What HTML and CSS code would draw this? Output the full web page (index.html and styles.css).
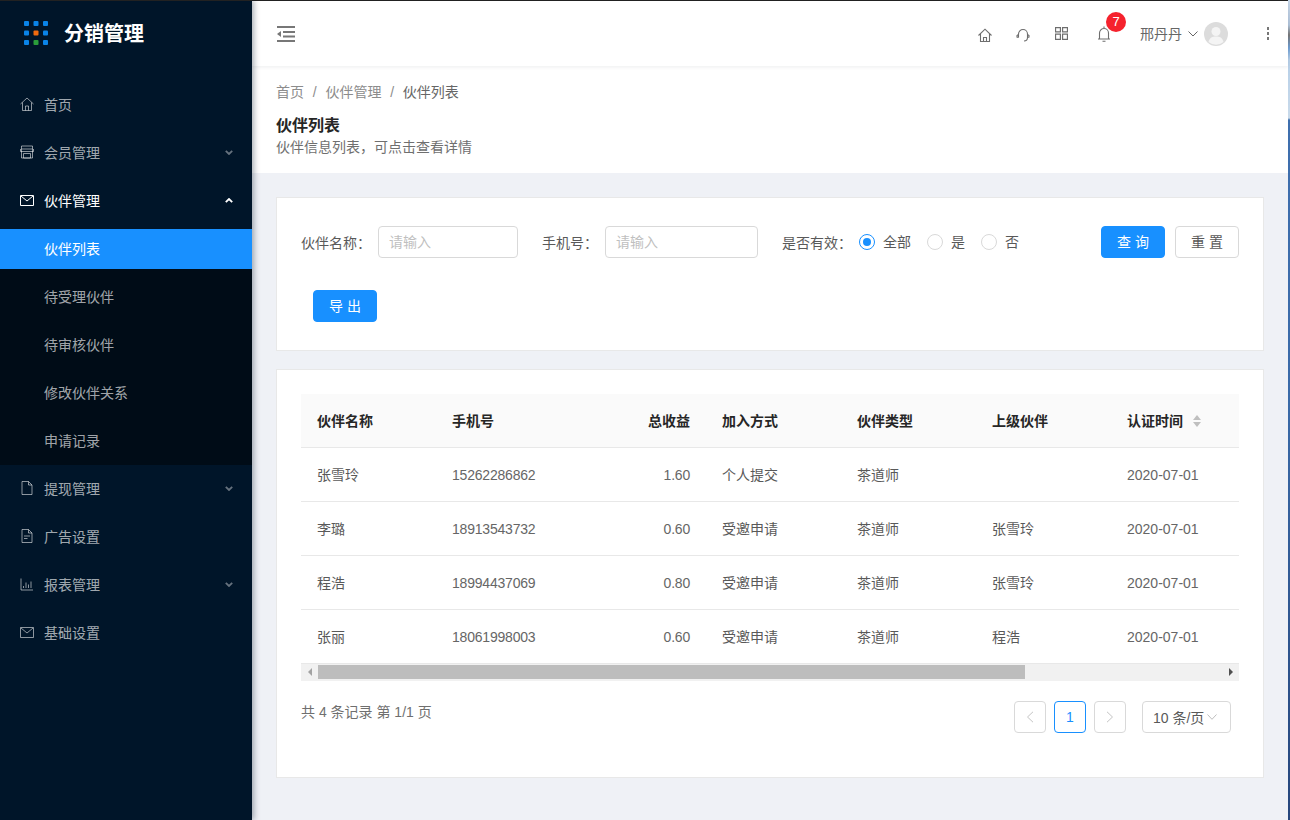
FILE: index.html
```html
<!DOCTYPE html>
<html lang="zh-CN">
<head>
  <meta charset="UTF-8">
  <title>伙伴列表</title>
  <link rel="stylesheet" href="styles.css">
</head>
<body>

<div class="app">
  <!-- Sidebar -->
  <aside class="sidebar">
    <div class="logo">
      <svg class="logo-mark" width="24" height="24" viewBox="0 0 24 24">
        <rect x="0" y="0" width="5" height="5" rx="1" fill="#0a84e8"/>
        <rect x="9.500" y="0" width="5" height="5" rx="1" fill="#0a84e8"/>
        <rect x="19" y="0" width="5" height="5" rx="1" fill="#0a84e8"/>
        <rect x="0" y="9.500" width="5" height="5" rx="1" fill="#0a84e8"/>
        <rect x="9.500" y="9.500" width="5" height="5" rx="1" fill="#f06a0f"/>
        <rect x="19" y="9.500" width="5" height="5" rx="1" fill="#0a84e8"/>
        <rect x="0" y="19" width="5" height="5" rx="1" fill="#0a84e8"/>
        <rect x="9.500" y="19" width="5" height="5" rx="1" fill="#2a9d3a"/>
        <rect x="19" y="19" width="5" height="5" rx="1" fill="#0a84e8"/>
      </svg>
      <span class="logo-text">分销管理</span>
    </div>

    <ul class="menu">
      <li class="menu-item">
        <svg class="menu-icon" viewBox="0 0 14 14"><path d="M.5 7 7 1l6.500 6M2.500 5.500v8h9v-8M5.500 13.500v-4.500h3v4.500"/></svg>
        首页
      </li>
      <li class="menu-item">
        <svg class="menu-icon" viewBox="0 0 14 14"><path d="M1.500 1h11v12h-11zM1.500 4h11M.5 4v2.500h13V4M3.500 8.500h7v4.500h-7z"/></svg>
        会员管理
        <svg class="arrow" viewBox="0 0 8 5"><path d="M.8.8 4 4l3.200-3.200"/></svg>
      </li>
      <li class="menu-item is-open">
        <svg class="menu-icon" viewBox="0 0 14 14"><path d="M.5 2.500h13v10H.5zM1 3l6 5 6-5"/></svg>
        伙伴管理
        <svg class="arrow" viewBox="0 0 8 5"><path d="M.8 4.200 4 1l3.200 3.200"/></svg>
      </li>
      <li>
        <ul class="submenu">
          <li class="submenu-item is-active">伙伴列表</li>
          <li class="submenu-item">待受理伙伴</li>
          <li class="submenu-item">待审核伙伴</li>
          <li class="submenu-item">修改伙伴关系</li>
          <li class="submenu-item">申请记录</li>
        </ul>
      </li>
      <li class="menu-item">
        <svg class="menu-icon" viewBox="0 0 14 14"><path d="M2 .5h6.500l3.500 3.500v9.500H2zM8.500.5V4H12"/></svg>
        提现管理
        <svg class="arrow" viewBox="0 0 8 5"><path d="M.8.8 4 4l3.200-3.200"/></svg>
      </li>
      <li class="menu-item">
        <svg class="menu-icon" viewBox="0 0 14 14"><path d="M2 .5h6.500l3.500 3.500v9.500H2zM8.500.5V4H12M4 7h6M4 9.500h3.500"/></svg>
        广告设置
      </li>
      <li class="menu-item">
        <svg class="menu-icon" viewBox="0 0 14 14"><path d="M1 1.500v11.500h12M3.500 11V9M6 11V5.500M8.500 11V7.500M11 11V4.500"/></svg>
        报表管理
        <svg class="arrow" viewBox="0 0 8 5"><path d="M.8.8 4 4l3.200-3.200"/></svg>
      </li>
      <li class="menu-item">
        <svg class="menu-icon" viewBox="0 0 14 14"><path d="M.5 2.500h13v10H.5zM1 3l6 5 6-5"/></svg>
        基础设置
      </li>
    </ul>
  </aside>

  <div class="main">
    <!-- Top bar -->
    <header class="topbar">
      <svg class="fold-icon" width="18" height="16" viewBox="0 0 18 16">
        <path d="M0 1h18M6 6h12M6 10.500h12M0 15h18" stroke="#777" stroke-width="2" fill="none"/>
        <path d="M0 8l4-3v6z" fill="#777"/>
      </svg>
      <div class="topbar-right">
        <svg class="top-icon icon-home" viewBox="0 0 14 14"><path d="M.5 7.500 7 1.200l6.500 6.300M2.500 6v7.500h9V6M5.500 13.500V9.500h3v4"/></svg>
        <svg class="top-icon icon-service" viewBox="0 0 14 14"><path d="M2.500 9.500V6a4.500 4.500 0 0 1 9 0v3.500M2.500 6.500 1 7.500v1.500l1.500.5M11.500 6.500l1.500 1v1.500l-1.500.5M11.500 9.500c0 2.200-1.500 3.500-3.500 3.500"/></svg>
        <svg class="top-icon icon-apps" viewBox="0 0 12 12"><path d="M.5.500h4.500v4H.5zM7 .5h4.500v4H7zM.5 6.500h4.500v5H.5zM7 6.500h4.500v5H7z"/></svg>
        <div class="bell">
          <svg class="bell-icon" viewBox="0 0 14 16"><path d="M2.500 12.500V7a4.500 4.500 0 0 1 9 0v5.500M1 13h12M5.500 15.300h3M7 .5v2"/></svg>
          <span class="badge">7</span>
        </div>
        <span class="user-name">邢丹丹</span>
        <svg class="user-arrow" width="10" height="6" viewBox="0 0 10 6"><path d="M.5.500 5 5 9.500.500" fill="none" stroke="#666"/></svg>
        <svg class="avatar" width="24" height="24" viewBox="0 0 24 24">
          <circle cx="12" cy="12" r="12" fill="#dcdcdc"/>
          <circle cx="12" cy="9.500" r="4.500" fill="#f4f4f4"/>
          <path d="M4.500 20c1-4.500 4-5.500 7.500-5.500s6.500 1 7.500 5.500a12 12 0 0 1-15 0z" fill="#f4f4f4"/>
        </svg>
        <div class="more-dots"><i></i><i></i><i></i></div>
      </div>
    </header>

    <!-- Page heading -->
    <section class="page-head">
      <div class="breadcrumb">
        <span>首页</span><em>/</em><span>伙伴管理</span><em>/</em><span class="current">伙伴列表</span>
      </div>
      <h2 class="page-title">伙伴列表</h2>
      <p class="page-desc">伙伴信息列表，可点击查看详情</p>
    </section>

    <div class="content">
      <!-- Filters -->
      <section class="card filter-card">
        <div class="filter-row">
          <label class="filter-label">伙伴名称：</label>
          <input class="text-input name-input" type="text" placeholder="请输入">
          <label class="filter-label phone-label">手机号：</label>
          <input class="text-input phone-input" type="text" placeholder="请输入">
          <label class="filter-label valid-label">是否有效：</label>
          <div class="radio is-checked"><span class="radio-dot"></span>全部</div>
          <div class="radio"><span class="radio-dot"></span>是</div>
          <div class="radio"><span class="radio-dot"></span>否</div>
          <button class="btn btn-primary btn-search">查 询</button>
          <button class="btn btn-reset">重 置</button>
        </div>
        <button class="btn btn-primary btn-export">导 出</button>
      </section>

      <!-- Table -->
      <section class="card table-card">
        <div class="table-wrap">
          <table class="data-table">
            <thead>
              <tr>
                <th>伙伴名称</th>
                <th>手机号</th>
                <th class="align-right">总收益</th>
                <th>加入方式</th>
                <th>伙伴类型</th>
                <th>上级伙伴</th>
                <th>认证时间<span class="sorter"><i class="up"></i><i class="down"></i></span></th>
              </tr>
            </thead>
            <tbody>
              <tr>
                <td>张雪玲</td><td class="num">15262286862</td><td class="num align-right">1.60</td>
                <td>个人提交</td><td>茶道师</td><td></td><td class="num date">2020-07-01</td>
              </tr>
              <tr>
                <td>李璐</td><td class="num">18913543732</td><td class="num align-right">0.60</td>
                <td>受邀申请</td><td>茶道师</td><td>张雪玲</td><td class="num date">2020-07-01</td>
              </tr>
              <tr>
                <td>程浩</td><td class="num">18994437069</td><td class="num align-right">0.80</td>
                <td>受邀申请</td><td>茶道师</td><td>张雪玲</td><td class="num date">2020-07-01</td>
              </tr>
              <tr>
                <td>张丽</td><td class="num">18061998003</td><td class="num align-right">0.60</td>
                <td>受邀申请</td><td>茶道师</td><td>程浩</td><td class="num date">2020-07-01</td>
              </tr>
            </tbody>
          </table>
        </div>
        <div class="scrollbar">
          <span class="scroll-arrow left"></span>
          <div class="scroll-track"><div class="scroll-thumb"></div></div>
          <span class="scroll-arrow right"></span>
        </div>
        <div class="table-foot">
          <span class="record-count">共 4 条记录 第 1/1 页</span>
          <div class="pager">
            <span class="page-btn is-disabled">
              <svg width="8" height="12" viewBox="0 0 8 12"><path d="M7 .8 1.500 6 7 11.200" fill="none" stroke="#c4c4c4"/></svg>
            </span>
            <span class="page-btn is-current">1</span>
            <span class="page-btn is-disabled">
              <svg width="8" height="12" viewBox="0 0 8 12"><path d="M1 .8 6.500 6 1 11.200" fill="none" stroke="#c4c4c4"/></svg>
            </span>
            <span class="page-size">10 条/页
              <svg width="10" height="6" viewBox="0 0 10 6"><path d="M.5.500 5 5.300 9.500.500" fill="none" stroke="#bfbfbf"/></svg>
            </span>
          </div>
        </div>
      </section>
    </div>
  </div>

  <div class="window-edge"></div>
</div>

</body>
</html>
```

FILE: styles.css
```css
* {
  box-sizing: border-box;
}

html, body {
  margin: 0;
  height: 100%;
  overflow: hidden;
}

body {
  font-family: "Liberation Sans", "Noto Sans CJK SC", sans-serif;
  font-size: 14px;
  color: #595959;
  background-color: #eff1f6;
}

ul {
  list-style: none;
  margin: 0;
  padding: 0;
}

.app {
  display: flex;
  height: 820px;
}

/* strip of the desktop behind the window, at its right side */
.window-edge {
  width: 2px;
  flex: none;
  background: linear-gradient(to bottom, #c8d8ea 0, #b0c4da 25px, #777 35px, #6f9fd4 48px, #b6cfe8 60px, #c9daea 118px, #3f6fae 120px, #3a6aa8 400px, #26467c 820px);
}

/* Sidebar */
.sidebar {
  width: 252px;
  flex: none;
  border-top: 1px solid #222;
  background-color: #001529;
  box-shadow: 2px 0 6px rgba(0, 21, 41, 0.35);
  position: relative;
  z-index: 2;
}

.logo {
  height: 80px;
  padding: 20px 0 0 24px;
  display: flex;
  align-items: flex-start;
}

.logo-mark {
  flex: none;
}

.logo-text {
  margin-left: 16px;
  font-size: 20px;
  line-height: 26px;
  font-weight: 700;
  color: #fff;
}

.menu-item {
  height: 48px;
  padding: 0 0 2px 20px;
  display: flex;
  align-items: center;
  position: relative;
  color: rgba(255, 255, 255, 0.65);
}

.menu-item.is-open {
  color: #fff;
}

.menu-icon {
  width: 14px;
  height: 14px;
  margin-right: 10px;
  fill: none;
  stroke: rgba(255, 255, 255, 0.55);
  stroke-width: 1;
}

.is-open .menu-icon {
  stroke: #fff;
}

.arrow {
  position: absolute;
  right: 19px;
  top: 21px;
  width: 8px;
  height: 5px;
  fill: none;
  stroke: rgba(255, 255, 255, 0.4);
  stroke-width: 1.800;
}

.is-open .arrow {
  stroke: #fff;
}

.submenu {
  background-color: #000c17;
}

.submenu-item {
  height: 48px;
  padding-left: 44px;
  line-height: 48px;
  color: rgba(255, 255, 255, 0.65);
}

.submenu-item.is-active {
  height: 40px;
  line-height: 40px;
  margin: 4px 0;
  color: #fff;
  background-color: #1890ff;
}

/* Top bar */
.main {
  flex: 1;
  min-width: 0;
  border-top: 1px solid #222;
}

.topbar {
  height: 65px;
  padding-left: 25px;
  display: flex;
  align-items: center;
  justify-content: space-between;
  background-color: #fff;
  box-shadow: 0 1px 4px rgba(0, 21, 41, 0.08);
  position: relative;
}

.topbar-right {
  display: flex;
  align-items: center;
  color: #666;
}

.top-icon {
  width: 14px;
  height: 14px;
  fill: none;
  stroke: #6e6e6e;
  stroke-width: 1.100;
  display: block;
}

.icon-home {
  margin: 2px 24px 0 0;
}

.icon-service {
  margin: 2px 25px 0 0;
}

.icon-apps {
  width: 13px;
  height: 13px;
  margin: -1px 29px 0 0;
}

.bell {
  position: relative;
  margin-right: 29px;
}

.bell-icon {
  width: 14px;
  height: 16px;
  display: block;
  fill: none;
  stroke: #6e6e6e;
  stroke-width: 1.100;
}

.badge {
  position: absolute;
  left: 9px;
  top: -14px;
  width: 20px;
  height: 20px;
  border-radius: 50%;
  background-color: #f5222d;
  color: #fff;
  font-size: 13px;
  line-height: 20px;
  text-align: center;
}

.user-name {
  padding-bottom: 2px;
}

.user-arrow {
  margin-left: 6px;
  margin-right: 6px;
}

.avatar {
  display: block;
  margin-right: 39px;
}

.more-dots {
  width: 2px;
  margin-right: 19px;
  display: flex;
  flex-direction: column;
  gap: 2px;
}

.more-dots i {
  width: 2px;
  height: 3px;
  background-color: #777;
}

/* Page heading */
.page-head {
  height: 107px;
  padding: 16px 24px 0;
  background-color: #fff;
}

.breadcrumb {
  line-height: 20px;
  color: #8c8c8c;
}

.breadcrumb em {
  font-style: normal;
  margin: 0 8.750px;
}

.breadcrumb .current {
  color: #666;
}

.page-title {
  margin: 13px 0 0;
  font-size: 16px;
  line-height: 22px;
  font-weight: 700;
  color: #262626;
}

.page-desc {
  margin: -1px 0 0;
  line-height: 22px;
  color: #6f6f6f;
}

/* Cards */
.content {
  padding: 24px 24px 0;
}

.card {
  background-color: #fff;
  border: 1px solid #e8e8e8;
}

.filter-card {
  height: 154px;
  padding: 28px 24px 0;
}

.filter-row {
  display: flex;
  align-items: center;
  height: 32px;
}

.filter-label {
  color: #595959;
  white-space: nowrap;
}

.text-input {
  height: 32px;
  padding: 0 10px;
  border: 1px solid #d9d9d9;
  border-radius: 4px;
  font: inherit;
  outline: none;
}

.text-input::placeholder {
  color: #bfbfbf;
}

.name-input {
  width: 140px;
  margin-left: 7px;
}

.phone-label {
  margin-left: 24px;
}

.phone-input {
  width: 153px;
  margin-left: 7px;
}

.valid-label {
  margin-left: 24px;
}

.radio {
  display: flex;
  align-items: center;
  margin-left: 15px;
  margin-right: 1px;
  padding-bottom: 2px;
}

.valid-label + .radio {
  margin-left: 7px;
}

.radio-dot {
  width: 16px;
  height: 16px;
  margin: 2px 8px 0 0;
  border: 1px solid #d9d9d9;
  border-radius: 50%;
  position: relative;
}

.is-checked .radio-dot {
  border-color: #1890ff;
}

.is-checked .radio-dot::after {
  content: "";
  position: absolute;
  left: 3px;
  top: 3px;
  width: 8px;
  height: 8px;
  border-radius: 50%;
  background-color: #1890ff;
}

.btn {
  width: 64px;
  height: 32px;
  padding: 0 0 2px;
  border: 1px solid #d9d9d9;
  border-radius: 4px;
  background-color: #fff;
  color: #595959;
  font: inherit;
}

.btn-primary {
  border-color: #1890ff;
  background-color: #1890ff;
  color: #fff;
}

.btn-search {
  margin-left: auto;
}

.btn-reset {
  margin-left: 10px;
}

.btn-export {
  display: block;
  margin: 32px 0 0 12px;
}

/* Table */
.table-card {
  height: 409px;
  margin-top: 18px;
  padding: 24px 24px 0;
}

.table-wrap {
  overflow: hidden;
}

.data-table {
  width: 945px;
  table-layout: fixed;
  border-collapse: collapse;
}

.data-table th,
.data-table td {
  width: 135px;
  height: 54px;
  padding: 0 16px;
  text-align: left;
  white-space: nowrap;
  border-bottom: 1px solid #e8e8e8;
}

.data-table th {
  height: 53px;
  font-weight: 700;
  color: #262626;
  background-color: #fafafa;
}

.data-table .align-right {
  text-align: right;
}

.data-table .num {
  padding-top: 2px;
  letter-spacing: -0.2px;
  color: #666;
}

.data-table .date {
  letter-spacing: 0;
}

.sorter {
  display: inline-block;
  width: 8px;
  margin-left: 10px;
  vertical-align: -1px;
}

.sorter i {
  display: block;
  width: 0;
  height: 0;
  border-left: 4px solid transparent;
  border-right: 4px solid transparent;
}

.sorter .up {
  border-bottom: 5px solid #bfbfbf;
  margin-bottom: 2px;
}

.sorter .down {
  border-top: 5px solid #bfbfbf;
}

.scrollbar {
  height: 17px;
  display: flex;
  align-items: center;
  background-color: #f1f1f1;
}

.scroll-arrow {
  width: 17px;
  flex: none;
  display: flex;
  justify-content: center;
}

.scroll-arrow::before {
  content: "";
  border-top: 4px solid transparent;
  border-bottom: 4px solid transparent;
}

.scroll-arrow.left::before {
  border-right: 4px solid #a3a3a3;
}

.scroll-arrow.right::before {
  border-left: 4px solid #505050;
}

.scroll-track {
  flex: 1;
  height: 14px;
}

.scroll-thumb {
  width: 707px;
  height: 100%;
  background-color: #bdbdbd;
}

.table-foot {
  display: flex;
  justify-content: space-between;
  align-items: flex-start;
  padding-top: 20px;
}

.record-count {
  line-height: 22px;
  color: #6f6f6f;
}

.pager {
  display: flex;
  margin-right: 8px;
}

.page-btn {
  width: 32px;
  height: 32px;
  margin-right: 8px;
  display: flex;
  align-items: center;
  justify-content: center;
  border: 1px solid #d9d9d9;
  border-radius: 4px;
}

.page-btn.is-current {
  border-color: #1890ff;
  color: #1890ff;
}

.page-size {
  width: 89px;
  height: 32px;
  margin-left: 8px;
  display: flex;
  align-items: center;
  gap: 3px;
  padding-left: 10px;
  border: 1px solid #d9d9d9;
  border-radius: 4px;
  white-space: nowrap;
}
```
